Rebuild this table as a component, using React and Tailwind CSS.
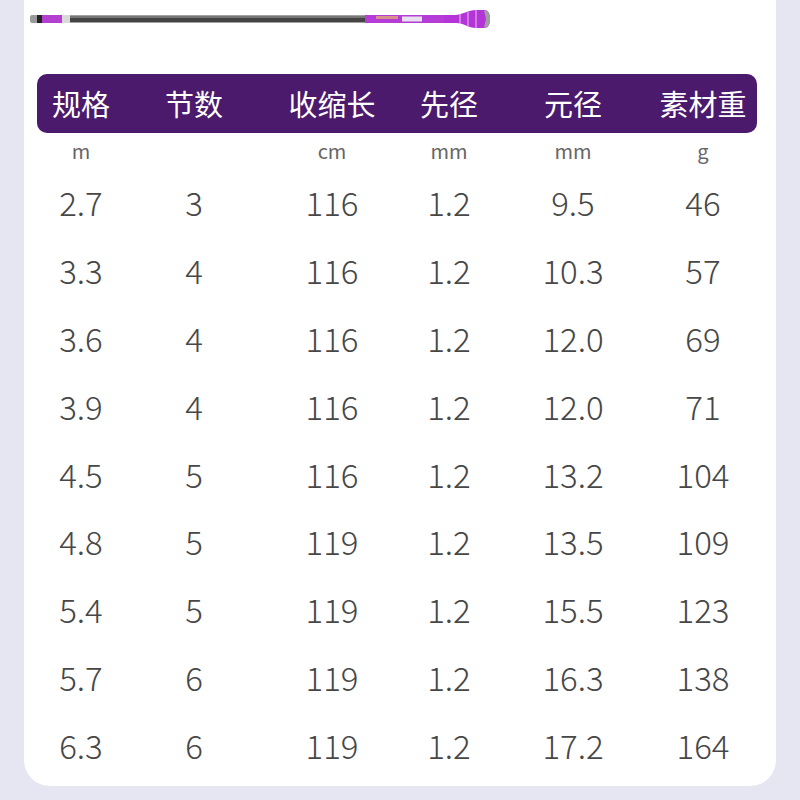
const cols = ["规格", "节数", "收缩长", "先径", "元径", "素材重"];
const units = ["m", "", "cm", "mm", "mm", "g"];

const rows = [
  ["2.7", "3", "116", "1.2", "9.5", "46"],
  ["3.3", "4", "116", "1.2", "10.3", "57"],
  ["3.6", "4", "116", "1.2", "12.0", "69"],
  ["3.9", "4", "116", "1.2", "12.0", "71"],
  ["4.5", "5", "116", "1.2", "13.2", "104"],
  ["4.8", "5", "119", "1.2", "13.5", "109"],
  ["5.4", "5", "119", "1.2", "15.5", "123"],
  ["5.7", "6", "119", "1.2", "16.3", "138"],
  ["6.3", "6", "119", "1.2", "17.2", "164"],
];

const gridCols = "grid grid-cols-[88px_138px_138px_96px_152px_108px]";

const Rod = () => (
  <svg width="752" height="40" viewBox="0 0 752 40" className="block">
    {/* tip end */}
    <rect x="6" y="15" width="8" height="8" rx="2" fill="#9a9a9a" />
    <rect x="13" y="15" width="5" height="8" fill="#222" />
    <rect x="18" y="15" width="20" height="8" fill="#b23fd0" />
    <rect x="38" y="15" width="8" height="8" fill="#d9d9d9" />
    {/* shaft */}
    <rect x="46" y="15.5" width="296" height="7" fill="#444" />
    <rect x="46" y="16" width="296" height="2" fill="#777" />
    {/* purple section */}
    <rect x="341" y="15" width="80" height="8" fill="#b53cd6" />
    <rect x="378" y="16.5" width="20" height="5" fill="#e8e0ee" />
    <rect x="352" y="16" width="22" height="3" fill="#e6b46a" opacity="0.7" />
    <path d="M420 15 L432 15 C440 14 444 10 452 10 L460 10 C464 10 466 13 466 19 C466 25 464 28 460 28 L452 28 C444 28 440 23 432 23 L420 23 Z" fill="#b534d8" />
    <line x1="436" y1="14" x2="436" y2="24" stroke="#e9c3f2" strokeWidth="1" />
    <line x1="444" y1="11" x2="444" y2="27" stroke="#e9c3f2" strokeWidth="1" />
    <line x1="452" y1="10" x2="452" y2="28" stroke="#e9c3f2" strokeWidth="1" />
    <path d="M460 10.5 C464 10.5 466 13 466 19 C466 25 464 27.5 460 27.5 L462 19 Z" fill="#a0a0a0" />
  </svg>
);

const App = () => {
  return (
    <div className="w-[800px] h-[800px] bg-[#e6e6f3] px-6 pb-[14px] overflow-hidden" style={{ fontFamily: '"Noto Sans CJK SC", "Noto Sans", sans-serif' }}>
      <div className="bg-white rounded-b-[26px] h-[786px] pl-[13px] pr-[19px]">
        <div className="h-[74px] -ml-[13px]">
          <Rod />
        </div>

        <div className={`${gridCols} h-[59px] items-center rounded-[10px] bg-[#4b1a6c] text-white text-[29px] leading-none`}>
          {cols.map((c) => (
            <div key={c} className="text-center">{c}</div>
          ))}
        </div>

        <div className={`${gridCols} h-[36px] items-center text-[20px] text-[#666] leading-none`}>
          {units.map((u, i) => (
            <div key={i} className="text-center">{u}</div>
          ))}
        </div>

        {rows.map((r, i) => (
          <div key={i} className={`${gridCols} h-[67.8px] items-center text-[33px] font-light text-[#474747] leading-none`}>
            {r.map((v, j) => (
              <div key={j} className="text-center">{v}</div>
            ))}
          </div>
        ))}
      </div>
    </div>
  );
};

export default App;
